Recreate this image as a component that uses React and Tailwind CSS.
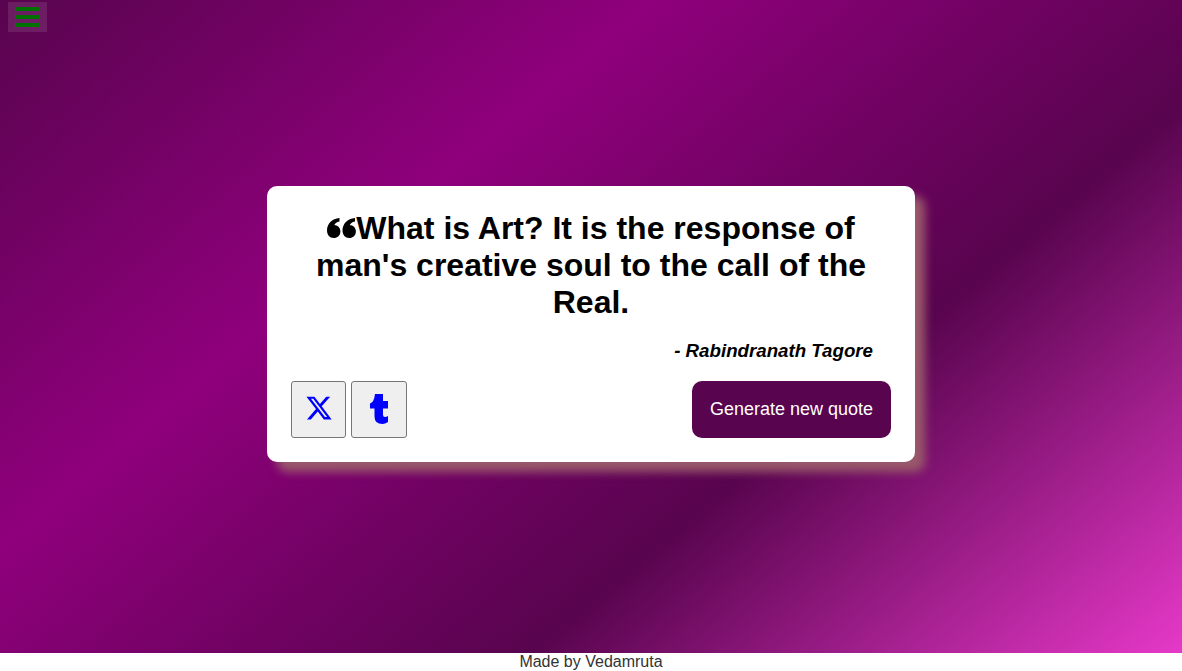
import { FaXTwitter } from 'react-icons/fa6'

function QuoteMark() {
  return (
    <svg viewBox="0 0 29 20" className="inline-block align-[1px] w-[29px] h-[20px]" fill="currentColor">
      <path d="M12.5 0V3.5C9.5 4 7.8 5.6 7.3 7.2C10.6 6.9 13.4 9.6 13.4 13.4C13.4 17.2 10.4 20 6.7 20C2.8 20 0 17 0 12.5C0 6 4.8 0.6 12.5 0Z" />
      <path d="M28 0V3.5C25 4 23.3 5.6 22.8 7.2C26.1 6.9 28.9 9.6 28.9 13.4C28.9 17.2 25.9 20 22.2 20C18.3 20 15.5 17 15.5 12.5C15.5 6 20.3 0.6 28 0Z" />
    </svg>
  )
}

function TumblrMark() {
  return (
    <svg viewBox="0 0 18 30" className="w-[18px] h-[30px]" fill="currentColor">
      <path d="M5 0H13V7H18V14.5H13V21Q13 23 15 23Q16.5 23 18 22V28Q15 30 12.5 30Q4.5 30 4.5 22.5V14.5H0V9.5Q4 8.5 5 0Z" />
    </svg>
  )
}

export default function App() {
  return (
    <div className="h-[671px] flex flex-col font-['Liberation_Sans',Arial,sans-serif] overflow-hidden">
      <main className="relative flex-1 flex items-center justify-center bg-[linear-gradient(140deg,#58044e,#8f007c,#58044e,#e639c8)]">
        <button className="absolute left-2 top-0.5 w-[39px] h-[30px] bg-white/10 flex flex-col items-center justify-center gap-1">
          <span className="w-[25px] h-1 bg-[#007000]" />
          <span className="w-[25px] h-1 bg-[#007000]" />
          <span className="w-[25px] h-1 bg-[#007000]" />
        </button>

        <section className="w-[648px] h-[276px] mb-[5px] bg-white rounded-[10px] p-6 flex flex-col shadow-[10px_10px_10px_#99596b]">
          <h1 className="text-[32px] leading-[36.8px] font-bold text-black text-center px-[2px]">
            <QuoteMark />What is Art? It is the response of man's creative soul to the call of the Real.
          </h1>
          <p className="mt-[20px] pr-[18px] text-right text-[18.72px] italic font-bold text-black leading-[21.5px]">- Rabindranath Tagore</p>
          <div className="mt-auto flex items-stretch">
            <button className="w-[55px] h-[57px] pb-[3px] flex items-center justify-center bg-[#efefef] border border-[#767676] rounded-[3px] text-[#0000ff]">
              <FaXTwitter className="w-7 h-7" />
            </button>
            <button className="ml-[5px] w-[56px] h-[57px] pb-[2px] flex items-center justify-center bg-[#efefef] border border-[#767676] rounded-[3px] text-[#0000ff]">
              <TumblrMark />
            </button>
            <button className="ml-auto w-[199px] h-[57px] pb-[2px] bg-[#58044e] text-white rounded-[10px] text-lg">Generate new quote</button>
          </div>
        </section>
      </main>
      <footer className="h-[18px] bg-white text-center text-base leading-[18px] text-[#333]">Made by Vedamruta</footer>
    </div>
  )
}
